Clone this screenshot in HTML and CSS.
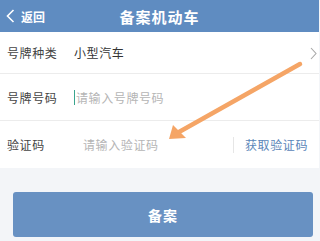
FILE: index.html
```html
<!DOCTYPE html>
<html lang="zh">
<head>
<meta charset="utf-8">
<link rel="stylesheet" href="styles.css">
</head>
<body>
<div class="page">
  <header class="topbar">
    <div class="back">
      <svg class="back-icon" width="9" height="14" viewBox="0 0 9 14"><path d="M7.5 1 L1.5 7 L7.5 13" fill="none" stroke="#fff" stroke-width="1.6"/></svg>
      <span>返回</span>
    </div>
    <div class="title">备案机动车</div>
  </header>
  <section class="form">
    <div class="row row1">
      <span class="label">号牌种类</span>
      <span class="value">小型汽车</span>
      <svg class="chev" width="7" height="13" viewBox="0 0 7 13"><path d="M1 1 L6 6.5 L1 12" fill="none" stroke="#a8a8a8" stroke-width="1.1"/></svg>
    </div>
    <div class="row row2">
      <span class="label">号牌号码</span>
      <span class="cursor"></span>
      <span class="ph">请输入号牌号码</span>
    </div>
    <div class="row row3">
      <span class="label">验证码</span>
      <span class="ph ph3">请输入验证码</span>
      <span class="vsep"></span>
      <span class="getcode">获取验证码</span>
    </div>
  </section>
  <div class="btn-wrap">
    <div class="btn">备案</div>
  </div>
  <svg class="arrow" width="319" height="241" viewBox="0 0 319 241">
    <line x1="300" y1="64" x2="179" y2="132" stroke="#f5a566" stroke-width="4.5" stroke-linecap="round"/>
    <polygon points="169,139 173,125 186,138" fill="#f5a566"/>
  </svg>
</div>
</body>
</html>
```
FILE: styles.css
```css
* { box-sizing: border-box; }
html, body { margin: 0; padding: 0; }
body {
  width: 319px;
  height: 241px;
  overflow: hidden;
  background: #f3f5f8;
  font-family: "Noto Sans CJK SC", "Noto Sans", sans-serif;
}
.page { position: relative; width: 319px; height: 241px; }
.topbar {
  height: 32px;
  background: #5f8cc1;
  display: flex;
  align-items: center;
  position: relative;
  color: #fff;
}
.back {
  display: flex;
  align-items: center;
  padding-left: 6px;
  font-size: 12px;
  font-weight: 700;
  gap: 6px;
}
.title {
  position: absolute;
  left: 0;
  right: 0;
  text-align: center;
  font-size: 15px;
  font-weight: 700;
  letter-spacing: 1px;
  pointer-events: none;
}
.form { background: #fff; }
.row {
  display: flex;
  align-items: center;
  padding-left: 7px;
  margin-left: 5px;
  border-bottom: 1px solid #ececec;
  font-size: 12px;
  letter-spacing: 0.6px;
  margin-left: 0;
  position: relative;
}
.row::after { display: none; }
.row1 { height: 42px; }
.row2 { height: 47px; }
.row3 { height: 47px; border-bottom: none; }
.label { color: #444; width: 67px; flex: none; }
.value { color: #333; }
.chev { position: absolute; right: 2px; top: 15px; }
.cursor { width: 1px; height: 15px; background: #3aa58e; margin-left: 0; margin-right: 1px; }
.ph { color: #b5b5b5; }
.ph3 { margin-left: 9px; }
.vsep { width: 1px; height: 16px; background: #e6e6e6; margin-left: auto; }
.getcode { color: #5b86b9; margin-left: 11px; margin-right: 11px; }
.btn-wrap { padding: 24px 6px 0 13px; }
.btn {
  height: 45px;
  background: #6891c2;
  border-radius: 3px;
  color: #fff;
  font-size: 14px;
  font-weight: 700;
  letter-spacing: 1px;
  display: flex;
  align-items: center;
  justify-content: center;
}
.arrow { position: absolute; left: 0; top: 0; pointer-events: none; }
```
